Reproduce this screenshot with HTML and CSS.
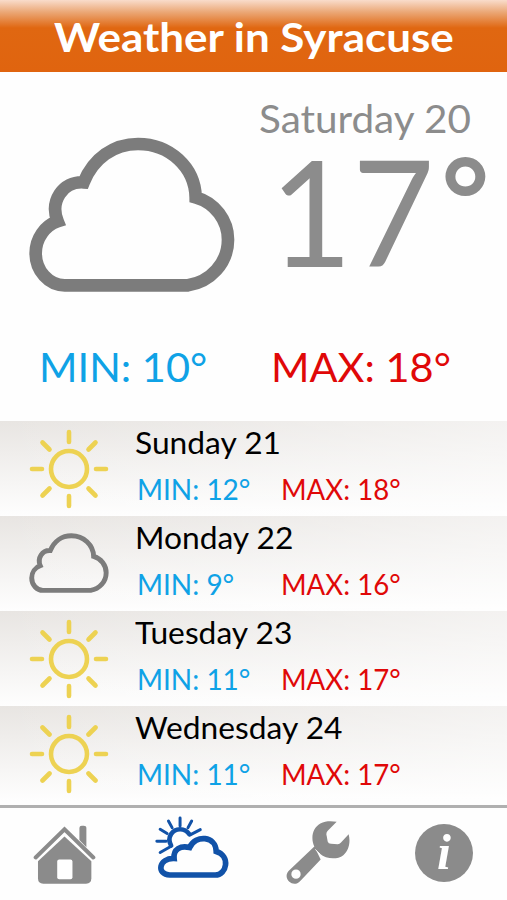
FILE: index.html
```
<!DOCTYPE html>
<html lang="en">
<head>
  <meta charset="utf-8">
  <meta name="viewport" content="width=device-width, initial-scale=1">
  <title>Weather in Syracuse</title>
  <link rel="stylesheet" href="styles.css">
</head>
<body>
  <svg class="defs" width="0" height="0">
    <symbol id="cloud" viewBox="88 141 618 465">
      <path d="M195 586C147 586 108 542 108 490C108 445 136 407 174 394C150 335 188 273 252 277C281 205 342 162 415 162C510 162 586 232 588 322C645 338 685 390 685 449C685 520 632 575 565 586Z" fill="none" stroke="currentColor" stroke-width="38"/>
    </symbol>
    <symbol id="sun" viewBox="-40 -40 80 80">
      <g fill="none" stroke="currentColor" stroke-width="4.6" stroke-linecap="round">
        <circle r="18"/>
        <path d="M0-27V-37M0 27V37M-27 0H-37M27 0H37M-19.5-19.5L-26.5-26.5M19.5-19.5L26.5-26.5M-19.5 19.5L-26.5 26.5M19.5 19.5L26.5 26.5"/>
      </g>
    </symbol>
  </svg>

  <h1 class="header"><span>Weather in Syracuse</span></h1>

  <div class="today">
    <svg class="today-icon"><use href="#cloud"/></svg>
    <div class="today-info">
      <div class="today-date"><span>Saturday 20</span></div>
      <div class="today-temp"><span>17</span><span class="degree">°</span></div>
    </div>
  </div>
  <div class="today-range">
    <div class="min"><span>MIN: 10°</span></div>
    <div class="max"><span>MAX: 18°</span></div>
  </div>

  <div class="forecast">
    <div class="day">
      <svg class="day-icon sun"><use href="#sun"/></svg>
      <div>
        <div class="day-name"><span>Sunday 21</span></div>
        <div class="day-range"><div class="min"><span>MIN: 12°</span></div><div class="max"><span>MAX: 18°</span></div></div>
      </div>
    </div>
    <div class="day">
      <svg class="day-icon cloud"><use href="#cloud"/></svg>
      <div>
        <div class="day-name"><span>Monday 22</span></div>
        <div class="day-range"><div class="min"><span>MIN: 9°</span></div><div class="max"><span>MAX: 16°</span></div></div>
      </div>
    </div>
    <div class="day">
      <svg class="day-icon sun"><use href="#sun"/></svg>
      <div>
        <div class="day-name"><span>Tuesday 23</span></div>
        <div class="day-range"><div class="min"><span>MIN: 11°</span></div><div class="max"><span>MAX: 17°</span></div></div>
      </div>
    </div>
    <div class="day">
      <svg class="day-icon sun"><use href="#sun"/></svg>
      <div>
        <div class="day-name"><span>Wednesday 24</span></div>
        <div class="day-range"><div class="min"><span>MIN: 11°</span></div><div class="max"><span>MAX: 17°</span></div></div>
      </div>
    </div>
  </div>

  <div class="nav">
    <svg class="nav-home" viewBox="38 75 188 178">
      <path d="M132 110L213 184V236Q213 252 197 252H68Q52 252 52 236V184Z" fill="currentColor"/>
      <rect x="110" y="179" width="46" height="60" rx="6" fill="#fff"/>
      <path d="M177 120V84Q177 77 184 77H190Q198 77 198 84V142Z" fill="currentColor"/>
      <path d="M45 173L132 88L219 173" fill="none" stroke="currentColor" stroke-width="12" stroke-linecap="round"/>
    </svg>
    <svg class="nav-weather active" viewBox="403 48 222 190">
      <g fill="none" stroke="currentColor" stroke-linecap="round">
        <path d="M451 137C437 112 455 88 478 88C490 88 500 94 506 103" stroke-width="14"/>
        <path d="M478 54V78M443 63L454 83M513 63L502 83M418 88L439 101M539 89L510 104M408 124H436M418 158L451 139" stroke-width="9"/>
        <path d="M447 226C406 225 413 174 460 176C457 148 480 136 507 143C525 103 586 108 587 155C631 168 619 226 584 226Z" stroke-width="17"/>
      </g>
    </svg>
    <svg class="nav-wrench" viewBox="46 60 192 194">
      <path fill="currentColor" fill-rule="evenodd" d="M131 139C119 113 126 83 149 70C164 62 182 62 198 65L172 91Q165 97 168 107L171 124Q173 131 181 131L201 132Q207 132 211 127L234 102C240 125 235 151 218 165C199 179 168 178 147 160L137 151L150 178L91 240C81 253 66 254 56 245C45 235 45 220 56 210ZM76 208A14 14 0 1 0 76 236A14 14 0 1 0 76 208Z"/>
      <path d="M134 148L148 162" stroke="#fff" stroke-width="3"/>
    </svg>
    <div class="nav-info"><span>i</span></div>
  </div>
</body>
</html>
```
FILE: styles.css
```
body {
  margin: 0;
  width: 507px;
  height: 900px;
  overflow: hidden;
  background: #fefefe;
  font-family: Lato, "Open Sans", sans-serif;
  color: #000;
}
.defs {
  display: block;
}
span {
  display: inline-block;
  transform-origin: left;
  white-space: pre;
}
.header {
  margin: 0;
  height: 72px;
  padding-left: 54px;
  box-sizing: border-box;
  background: linear-gradient(#f9dccb 0, #eba877 12px, #e06711 28px, #e0640f 100%);
  color: #fff;
  font-size: 41px;
  line-height: 73px;
}
.header span {
  transform: scaleX(1.072);
}
.today {
  display: flex;
  height: 268px;
}
.today-icon {
  width: 206px;
  height: 155px;
  margin: 65px 0 0 29px;
  color: #7c7c7c;
}
.today-info {
  color: #8c8c8c;
}
.today-date {
  margin: 21px 0 0 24px;
  font-size: 39px;
  line-height: 50px;
}
.today-date span {
  transform: scaleX(1.037);
}
.today-temp {
  display: flex;
  margin-left: 35px;
  font-size: 147px;
  line-height: 134px;
}
.today-temp span {
  transform: scaleX(.965);
}
.today-temp .degree {
  margin-left: 1px;
  font-size: 115px;
  font-weight: bold;
  line-height: 106px;
  transform: none;
}
.today-range {
  display: flex;
  height: 81px;
  padding-left: 39px;
  font-size: 41px;
  line-height: 53px;
}
.today-range span {
  transform: scaleX(1.012);
}
.today-range .min {
  width: 232px;
}
.min {
  color: #0fa2e6;
}
.max {
  color: #e00808;
}
.day {
  display: flex;
  height: 95px;
  background: linear-gradient(to right, rgba(255,255,255,0), rgba(255,255,255,.5)), linear-gradient(#e8e5e2, #fefefe);
}
.day-icon {
  width: 80px;
  height: 80px;
  margin: 8px 26px 0 29px;
}
.sun {
  color: #edd252;
}
.cloud {
  height: 60px;
  margin-top: 17px;
  color: #7c7c7c;
}
.day-name {
  font-size: 30px;
  line-height: 42px;
}
.day-name span {
  transform: scaleX(1.058);
}
.day-range {
  display: flex;
  padding-left: 2px;
  font-size: 28px;
  line-height: 52px;
}
.day-range .min {
  width: 144px;
}
.day-range .max span {
  transform: scaleX(.985);
}
.nav {
  display: flex;
  height: 92px;
  margin-top: 4px;
  border-top: 3px solid #b0b0b0;
  color: #8b8b8b;
}
.active {
  color: #1152a8;
}
.nav-home {
  width: 63px;
  height: 59px;
  margin: 17px 59px 0 33px;
}
.nav-weather {
  width: 74px;
  height: 63px;
  margin: 8px 57px 0 0;
}
.nav-wrench {
  width: 64px;
  height: 65px;
  margin: 12px 65px 0 0;
}
.nav-info {
  width: 58px;
  height: 58px;
  margin-top: 16px;
  border-radius: 50%;
  background: #8b8b8b;
  color: #fff;
  font: italic bold 50px/57px "Liberation Serif", serif;
  text-align: center;
}
```
